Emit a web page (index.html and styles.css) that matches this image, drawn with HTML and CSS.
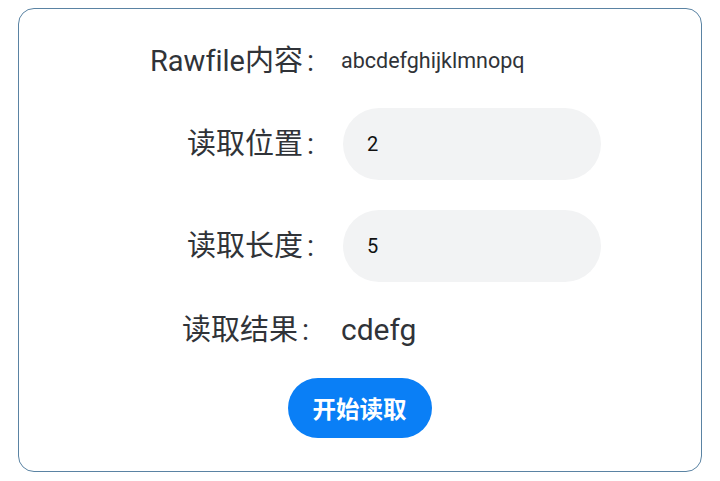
FILE: index.html
```html
<!DOCTYPE html>
<html lang="zh">
<head>
<meta charset="utf-8">
<link rel="stylesheet" href="styles.css">
</head>
<body>
<div class="card">
  <div class="row row-top">
    <div class="label">Rawfile内容<span class="colon">:</span></div>
    <div class="value small">abcdefghijklmnopq</div>
  </div>
  <div class="row row-input">
    <div class="label">读取位置<span class="colon">:</span></div>
    <div class="input">2</div>
  </div>
  <div class="row row-input">
    <div class="label">读取长度<span class="colon">:</span></div>
    <div class="input">5</div>
  </div>
  <div class="row row-result">
    <div class="label label-result">读取结果<span class="colon">:</span></div>
    <div class="value big">cdefg</div>
  </div>
  <div class="actions">
    <button class="btn">开始读取</button>
  </div>
</div>
</body>
</html>
```
FILE: styles.css
```css
html, body {
  margin: 0;
  padding: 0;
  background: #ffffff;
}
body {
  width: 720px;
  height: 481px;
  font-family: Roboto, "Noto Sans CJK SC", sans-serif;
  font-variant-ligatures: none;
  color: #303338;
}
.card {
  box-sizing: border-box;
  margin: 8px 0 0 18px;
  width: 684px;
  height: 464px;
  border: 1px solid #5a83a3;
  border-radius: 16px;
  padding: 35px 0 0 0;
  display: flex;
  flex-direction: column;
  gap: 30px;
}
.row {
  display: grid;
  grid-template-columns: 295px 1fr;
  column-gap: 27px;
  align-items: center;
}
.row-top { height: 34px; }
.row-input { height: 72px; }
.row-result { height: 36px; }
.label {
  font-size: 29px;
  line-height: 1;
  text-align: right;
  white-space: nowrap;
  color: #303338;
}
.colon {
  margin-left: 4px;
}
.label-result {
  padding-right: 5px;
}
.value {
  white-space: nowrap;
  line-height: 1;
}
.small {
  font-size: 21.5px;
  color: #303338;
}
.big {
  font-size: 30px;
  color: #303338;
}
.input {
  box-sizing: border-box;
  margin-left: 2px;
  width: 258px;
  height: 72px;
  border-radius: 36px;
  background: #f2f3f4;
  padding-left: 24px;
  display: flex;
  align-items: center;
  font-size: 20px;
  color: #111111;
}
.actions {
  display: flex;
  justify-content: center;
  padding-right: 1px;
}
.btn {
  width: 144px;
  height: 60px;
  border: none;
  border-radius: 30px;
  background: #0a7ff6;
  color: #ffffff;
  font-family: "Noto Sans CJK SC", sans-serif;
  font-weight: 700;
  font-size: 23.5px;
  padding: 0;
}
```
